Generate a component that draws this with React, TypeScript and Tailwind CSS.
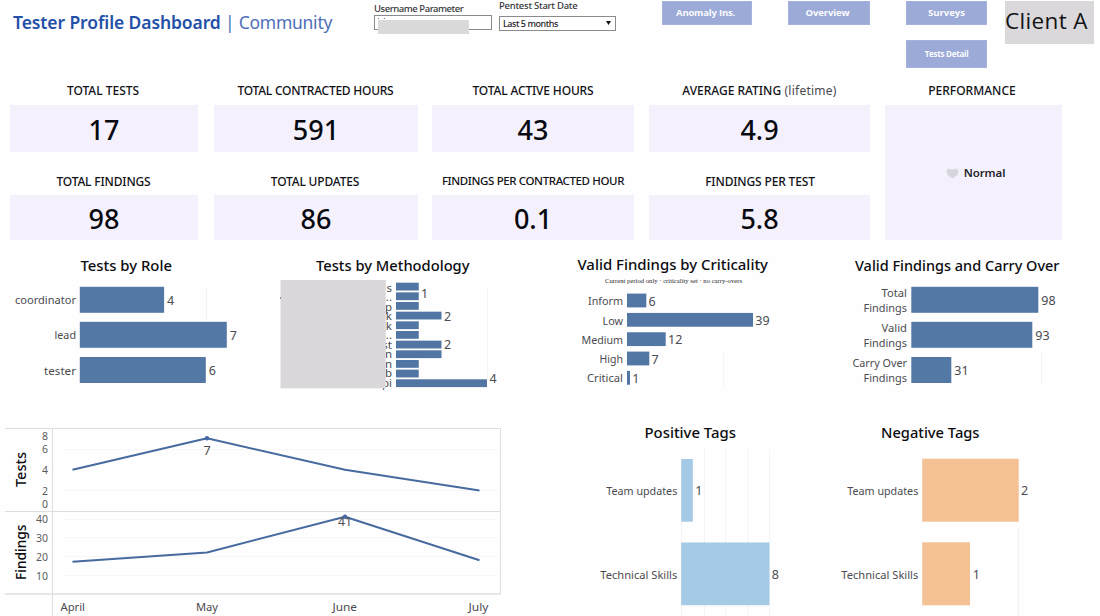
import type { ReactNode } from 'react';

type TextProps = {
  x: number;
  y: number;
  w?: number;
  size?: number;
  anchor?: 'start' | 'middle' | 'end';
  className?: string;
  children: ReactNode;
};

function T({ x, y, w, size = 11.5, anchor = 'start', className = 'fill-[#4b4b50]', children }: TextProps) {
  return (
    <text
      x={x}
      y={y}
      fontSize={size}
      textAnchor={anchor}
      textLength={w}
      lengthAdjust="spacingAndGlyphs"
      className={className}
    >
      {children}
    </text>
  );
}

function Title({ x, y, w, children }: { x: number; y: number; w: number; children: string }) {
  return (
    <T x={x} y={y} w={w} size={14} className="fill-[#0c0c10] font-medium">
      {children}
    </T>
  );
}

function NavButton({ label, className }: { label: string; className: string }) {
  return (
    <button
      className={`flex shrink-0 items-center justify-center border border-[#a5b3dc] bg-[#9baad7] font-['Open_Sans'] font-bold text-[#fbfcff] ${className}`}
    >
      {label}
    </button>
  );
}

type StatProps = { label: string; note?: string; value: string; second?: boolean; labelClass?: string };

function Stat({ label, note, value, second, labelClass = 'tracking-[-0.1px]' }: StatProps) {
  return (
    <div className="flex flex-col">
      <div className={`flex items-center justify-center whitespace-nowrap pr-1 text-xs font-medium text-[#111116] ${second ? 'h-[28px] pt-px' : 'h-[29px]'}`}>
        <span className={labelClass}>
          {label}
          {note && <span className="font-normal tracking-[0.25px] text-[#48484e]"> {note}</span>}
        </span>
      </div>
      <div className={`flex items-center justify-center bg-[#f4f1fc] text-[27px] font-medium leading-none text-[#08080f] ${second ? 'h-[45px] pt-[2px]' : 'h-[47px] pt-px'}`}>
        {value}
      </div>
    </div>
  );
}

const roles = [
  { name: 'coordinator', value: 4, w: 84.3, tw: 61, y: 286.8 },
  { name: 'lead', value: 7, w: 147, tw: 21.5, y: 321.8 },
  { name: 'tester', value: 6, w: 126, tw: 32, y: 357 },
];

function RoleChart() {
  return (
    <svg width="270" height="164" viewBox="0 250 270 164">
      <Title x={80.5} y={270.8} w={91.5}>Tests by Role</Title>
      <path d="M206.5 288V320" className="stroke-[#f2f2f5]" />
      {roles.map((r) => (
        <g key={r.name}>
          <rect x="79.8" y={r.y} width={r.w} height="26" className="fill-[#5478a6]" />
          <T x={76} y={r.y + 17.5} w={r.tw} anchor="end">{r.name}</T>
          <T x={82.7 + r.w} y={r.y + 18} size={12.5}>{r.value}</T>
        </g>
      ))}
    </svg>
  );
}

const methods = [
  { tail: 's', n: 1, shown: false },
  { tail: '..', n: 1, shown: false },
  { tail: 'p', n: 1, shown: false },
  { tail: 'k', n: 2, shown: true },
  { tail: 'k', n: 1, shown: false },
  { tail: '..', n: 1, shown: false },
  { tail: 'st', n: 2, shown: true },
  { tail: 'n', n: 2, shown: false },
  { tail: 'n', n: 1, shown: false },
  { tail: 'b', n: 1, shown: false },
  { tail: 'pi', n: 4, shown: false },
];

function MethodChart() {
  return (
    <svg width="250" height="164" viewBox="270 250 250 164">
      <Title x={316} y={270.8} w={153.5}>Tests by Methodology</Title>
      <path d="M487.5 288V379" className="stroke-[#f3f3f6]" />
      {methods.map((m, i) => (
        <g key={i}>
          <rect x="396" y={282.7 + i * 9.66} width={m.n * 22.75} height="7.8" className="fill-[#5176a4]" />
          <T x={392} y={291.6 + i * 9.52} anchor="end">{m.tail}</T>
          {m.shown && <T x={444} y={320.7 + (i - 3) * 9.4} size={12.5}>{m.n}</T>}
        </g>
      ))}
      <T x={421} y={297.7} size={12.5}>1</T>
      <T x={489.5} y={383.3} size={12.5}>4</T>
      <rect x="280.5" y="280" width="105.3" height="108.3" className="fill-[#d9d7da]" />
      <path d="M280.5 297v2" className="stroke-[#909096]" />
    </svg>
  );
}

const criticality = [
  { name: 'Inform', value: 6, w: 19.3, tw: 35 },
  { name: 'Low', value: 39, w: 126, tw: 20.5 },
  { name: 'Medium', value: 12, w: 38.7, tw: 41.5 },
  { name: 'High', value: 7, w: 22.3, tw: 23.5 },
  { name: 'Critical', value: 1, w: 3, tw: 36 },
];

function CriticalityChart() {
  return (
    <svg width="300" height="164" viewBox="520 250 300 164">
      <Title x={577.5} y={270.2} w={190.5}>Valid Findings by Criticality</Title>
      <T x={605} y={283.3} w={137} size={6.8} className="fill-[#25252a] font-['Liberation_Serif']">
        Current period only · criticality set · no carry-overs
      </T>
      <path d="M723.5 352V389" className="stroke-[#f5f5f7]" />
      {criticality.map((c, i) => (
        <g key={c.name}>
          <rect x="627" y={293.6 + i * 19.33} width={c.w} height="13.8" className="fill-[#5377a5]" />
          <T x={623} y={305.3 + i * 19.25} w={c.tw} anchor="end">{c.name}</T>
          <T x={629.3 + c.w} y={305.6 + i * 19.33} size={12.5}>{c.value}</T>
        </g>
      ))}
    </svg>
  );
}

const carry = [
  { lines: ['Total', 'Findings'], tw: [25.5, 43.5], value: 98, w: 127, y: 286.8 },
  { lines: ['Valid', 'Findings'], tw: [25.5, 43.5], value: 93, w: 121, y: 321.8 },
  { lines: ['Carry Over', 'Findings'], tw: [54.5, 43.5], value: 31, w: 40, y: 357 },
];

function CarryChart() {
  return (
    <svg width="280" height="164" viewBox="820 250 280 164">
      <Title x={855} y={270.8} w={204.5}>Valid Findings and Carry Over</Title>
      <path d="M1041.5 352V384" className="stroke-[#f4f4f7]" />
      {carry.map((c) => (
        <g key={c.lines[0]}>
          <rect x="911.3" y={c.y} width={c.w} height="26" className="fill-[#5478a6]" />
          {c.lines.map((line, i) => (
            <T key={line} x={907} y={c.y + 10.3 + i * 15} w={c.tw[i]} anchor="end">{line}</T>
          ))}
          <T x={914.3 + c.w} y={c.y + 18} size={12.5}>{c.value}</T>
        </g>
      ))}
    </svg>
  );
}

const ticks = [
  ['8', 436.2], ['6', 449.5], ['4', 470], ['2', 491], ['0', 504.3],
  ['40', 519.3], ['30', 537.7], ['20', 557], ['10', 575.7],
] as const;

function TrendChart() {
  return (
    <svg width="520" height="202" viewBox="0 414 520 202">
      <path d="M64 449.5H497M64 490.5H497M64 519.5H497M64 537.5H497M64 556.5H497M64 575.5H497" className="stroke-[#f8f8f9]" />
      <path d="M5 428.5H500.5V594M5 511.5H500.5M52.5 428V616" fill="none" className="stroke-[#dddde1]" />
      <path d="M5 594H500.5" className="stroke-[#e6e6e9] stroke-2" />
      {ticks.map(([label, y]) => (
        <T key={label} x={48} y={y + 3.8} size={10.5} anchor="end" className="fill-[#5c5c60]">{label}</T>
      ))}
      <g transform="translate(26 487) rotate(-90)">
        <Title x={0} y={0} w={35}>Tests</Title>
      </g>
      <g transform="translate(26 580) rotate(-90)">
        <Title x={0} y={0} w={55.5}>Findings</Title>
      </g>
      <g fill="none" strokeLinejoin="round" className="stroke-[#476b9f] stroke-2">
        <path d="M72.5 469.8L207 438.3L345 469.7L479.5 490.5" />
        <path d="M72.5 561.8L207 552.5L345 516.8L479.5 560.2" />
      </g>
      <circle cx="207" cy="438.2" r="2.2" className="fill-[#4567a3]" />
      <circle cx="345" cy="516.8" r="2.2" className="fill-[#4567a3]" />
      <T x={207} y={455} size={12.5} anchor="middle">7</T>
      <T x={345} y={526.3} size={12} w={14} anchor="middle">41</T>
      <T x={60.5} y={611} w={24.5}>April</T>
      <T x={196} y={611} w={22}>May</T>
      <T x={332.5} y={611} w={24.5}>June</T>
      <T x={468.5} y={611} w={20}>July</T>
    </svg>
  );
}

function PositiveTags() {
  return (
    <svg width="300" height="202" viewBox="520 414 300 202">
      <Title x={644.5} y={437.5} w={91.5}>Positive Tags</Title>
      <path d="M704.5 449V616M725.5 449V616M748 449V616M769.5 449V616M681.5 521V616" className="stroke-[#f4f4f6]" />
      <rect x="681.2" y="459" width="11.6" height="62.7" className="fill-[#a4cae6]" />
      <rect x="681.2" y="542.5" width="88.3" height="62.7" className="fill-[#a4cae6]" />
      <T x={677.3} y={495} w={71} anchor="end">Team updates</T>
      <T x={677.3} y={578.5} w={77} anchor="end">Technical Skills</T>
      <T x={695.3} y={495.3} size={12.5}>1</T>
      <T x={771.8} y={578.8} size={12.5}>8</T>
    </svg>
  );
}

function NegativeTags() {
  return (
    <svg width="280" height="202" viewBox="820 414 280 202">
      <Title x={881} y={437.5} w={98.5}>Negative Tags</Title>
      <path d="M1018.5 528V616" className="stroke-[#f2f2f5]" />
      <rect x="922.2" y="458.7" width="96.5" height="63" className="fill-[#f4c195]" />
      <rect x="922.2" y="542.3" width="47.8" height="63" className="fill-[#f4c195]" />
      <T x={918.3} y={495} w={71} anchor="end">Team updates</T>
      <T x={918.3} y={578.5} w={77} anchor="end">Technical Skills</T>
      <T x={1021} y={495.3} size={12.5}>2</T>
      <T x={972.8} y={578.8} size={12.5}>1</T>
    </svg>
  );
}

export default function App() {
  return (
    <div className="flex h-[616px] w-[1100px] flex-col overflow-hidden bg-[#fefefe] font-['Noto_Sans',sans-serif]">
      <header className="flex h-[76px] shrink-0 items-start whitespace-nowrap">
        <h1 className="ml-[13px] w-[361px] pt-[9px] text-[17.5px] leading-[26px] tracking-[-0.26px] text-[#4e6fb8]">
          <span className="font-semibold tracking-[-0.1px] text-[#2450a8]">Tester Profile Dashboard</span> | Community
        </h1>
        <label className="flex w-[125px] flex-col pt-[3px] text-[9.5px] font-medium leading-[12px] tracking-[-0.45px] text-[#35353a]">
          Username Parameter
          <span className="relative h-[15px] w-[118px] border border-[#8b8b8f] bg-white">
            <span className="absolute left-[3px] top-[4px] h-[14px] w-[91px] bg-[#dbdadb]" />
            <span className="absolute left-[3px] top-[2px] h-px w-px bg-[#77777b]" />
            <span className="absolute left-[9px] top-[2px] h-px w-px bg-[#77777b]" />
          </span>
        </label>
        <label className="flex w-[163px] flex-col text-[9.5px] font-medium leading-[12px] tracking-[-0.25px] text-[#35353a]">
          Pentest Start Date
          <span className="mt-1 flex h-[15px] w-[117px] items-center justify-between border border-[#8b8b8f] bg-white pl-[3px] pr-[4px] text-[9px] tracking-[-0.45px] text-[#222226]">
            Last 5 months
            <svg width="5" height="4" viewBox="0 0 5 4" className="-mt-0.5"><path d="M0 0H5L2.5 4Z" className="fill-[#111]" /></svg>
          </span>
        </label>
        <nav className="flex pt-px">
          <NavButton label="Anomaly Ins." className="mr-[36px] h-[24px] w-[90px] pr-[3px] text-[9.5px] tracking-[-0.2px]" />
          <NavButton label="Overview" className="mr-[36px] h-[24px] w-[82px] pr-[3px] text-[9.5px] tracking-[-0.1px]" />
          <div className="mr-[18px] flex flex-col gap-[15px]">
            <NavButton label="Surveys" className="h-[24px] w-[81px] text-[9.5px]" />
            <NavButton label="Tests Detail" className="h-[28px] w-[81px] text-[8px] tracking-[-0.25px]" />
          </div>
        </nav>
        <div className="mt-px h-[43px] w-[89px] bg-[#dad8da] font-['Open_Sans'] text-[22.5px] leading-[39px] tracking-[0.35px] text-[#131316]">Client A</div>
      </header>

      <main className="flex flex-col">
        <section className="flex pl-[10px]">
          <div className="mr-[16px] flex w-[188px] flex-col gap-[15px]">
            <Stat label="TOTAL TESTS" value="17" labelClass="pl-0.5 tracking-normal" />
            <Stat label="TOTAL FINDINGS" value="98" second labelClass="pl-[3px] tracking-[-0.16px]" />
          </div>
          <div className="mr-[14px] flex w-[204px] flex-col gap-[15px]">
            <Stat label="TOTAL CONTRACTED HOURS" value="591" labelClass="pr-px pl-1 tracking-[-0.24px]" />
            <Stat label="TOTAL UPDATES" value="86" second labelClass="pl-0.5 tracking-[-0.18px]" />
          </div>
          <div className="mr-[15px] flex w-[202px] flex-col gap-[15px]">
            <Stat label="TOTAL ACTIVE HOURS" value="43" labelClass="pl-1 tracking-[-0.15px]" />
            <Stat label="FINDINGS PER CONTRACTED HOUR" value="0.1" second labelClass="-mt-0.5 pl-1 text-[11.5px] tracking-[-0.38px]" />
          </div>
          <div className="mr-[15px] flex w-[221px] flex-col gap-[15px]">
            <Stat label="AVERAGE RATING" note="(lifetime)" value="4.9" labelClass="pl-1 tracking-normal" />
            <Stat label="FINDINGS PER TEST" value="5.8" second labelClass="pl-[5px] tracking-[-0.15px]" />
          </div>
          <div className="flex w-[177px] flex-col">
            <div className="flex h-[29px] items-center justify-center pr-[3px] text-xs font-medium text-[#111116]">PERFORMANCE</div>
            <div className="flex h-[135px] items-center justify-center gap-[5px] bg-[#f4f1fc] pl-1 pt-px text-[11.5px] font-semibold tracking-[-0.1px] text-[#25252c]">
              <svg width="13" height="11" viewBox="0 0 13 11">
                <path d="M2 0.5L4 1.2H9L11 0.5L12.5 3.5L11.5 7L6.5 10.5L1.5 7L0.5 3.5Z" className="fill-[#d6d4dc]" />
              </svg>
              Normal
            </div>
          </div>
        </section>

        <section className="mt-[10px] flex">
          <RoleChart />
          <MethodChart />
          <CriticalityChart />
          <CarryChart />
        </section>

        <section className="flex">
          <TrendChart />
          <PositiveTags />
          <NegativeTags />
        </section>
      </main>
    </div>
  );
}
